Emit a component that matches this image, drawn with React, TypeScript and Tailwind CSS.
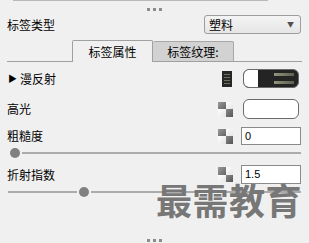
const font = { fontFamily: '"Noto Sans CJK SC", "Noto Sans", sans-serif' };

const Dots = () => (
  <div className="flex justify-center gap-[3px]">
    <span className="h-[3px] w-[3px] bg-[#8c8c8c]" />
    <span className="h-[3px] w-[3px] bg-[#8c8c8c]" />
    <span className="h-[3px] w-[3px] bg-[#8c8c8c]" />
  </div>
);

const Checker = () => (
  <div className="grid h-[15px] w-[15px] grid-cols-2 grid-rows-2">
    <span className="bg-gradient-to-br from-[#9a9a9a] to-[#666666]" />
    <span className="bg-gradient-to-br from-white to-[#e4e4e4]" />
    <span className="bg-gradient-to-br from-white to-[#e4e4e4]" />
    <span className="bg-gradient-to-br from-[#8a8a8a] to-[#555555]" />
  </div>
);

const Slider = ({ pos }: { pos: number }) => (
  <div className="flex h-[10px] items-center pl-[8px] pr-[8px]">
    <div className="h-[2px] bg-[#ababab]" style={{ width: pos }} />
    <span className="mx-[2px] h-[10px] w-[10px] shrink-0 rounded-full bg-[#808080]" />
    <div className="h-[2px] flex-1 bg-[#ababab]" />
  </div>
);

export default function App() {
  return (
    <div className="relative h-[243px] w-[309px] overflow-hidden bg-[#f0f0f0] text-[12px] leading-none text-black" style={font}>
      <div className="ml-[13px] h-px w-[255px] bg-[#b9b9b9]" />
      <div className="mt-[7px]">
        <Dots />
      </div>

      {/* type row */}
      <div className="mt-[4px] flex h-[19px] items-center pl-[7px] pr-[8px]">
        <span className="flex-1">标签类型</span>
        <div className="flex h-[19px] w-[97px] items-center justify-between rounded-[3px] border border-[#9d9d9d] bg-gradient-to-b from-[#f4f4f4] to-[#e6e6e6] pl-[4px] pr-[6px]">
          <span>塑料</span>
          <span className="text-[7px] text-[#505050]">▼</span>
        </div>
      </div>

      {/* tabs */}
      <div className="mx-[7px] mt-[6px] flex h-[22px] items-end border-b border-[#a0a0a0] pl-[65px]">
        <div className="-mb-px flex h-[22px] w-[81px] items-center justify-center rounded-t-[2px] border border-b-0 border-[#a0a0a0] bg-[#f0f0f0]">
          标签属性
        </div>
        <div className="flex h-[20px] w-[81px] items-center justify-center rounded-t-[2px] border border-b-0 border-l-0 border-[#a8a8a8] bg-[#d2d2d2]">
          标签纹理:
        </div>
      </div>

      {/* diffuse */}
      <div className="mt-[7px] flex h-[19px] items-center pl-[8px] pr-[10px]">
        <span className="mr-[3px] text-[9px]">▶</span>
        <span className="flex-1">漫反射</span>
        <div className="mr-[11px] flex h-[16px] w-[10px] flex-col justify-center gap-[2px] bg-[#262626] px-[2px]">
          <span className="h-px bg-[#6d7260]" />
          <span className="h-px bg-[#6d7260]" />
          <span className="h-px bg-[#6d7260]" />
          <span className="h-px bg-[#6d7260]" />
        </div>
        <div className="flex h-[19px] w-[56px] overflow-hidden rounded-[6px] border border-[#6a6a6a] bg-[#242424]">
          <span className="w-[14px] bg-white" />
          <div className="flex flex-1 flex-col justify-between py-[3px] pr-[4px] pl-[16px]">
            <span className="h-[3px] bg-gradient-to-r from-[#8f957c] to-[#5d614f]" />
            <span className="h-[3px] bg-gradient-to-r from-[#8f957c] to-[#5d614f]" />
          </div>
        </div>
      </div>

      {/* specular */}
      <div className="mt-[11px] flex h-[20px] items-center pl-[7px] pr-[10px]">
        <span className="flex-1">高光</span>
        <div className="mr-[10px]">
          <Checker />
        </div>
        <div className="h-[20px] w-[56px] rounded-[6px] border border-[#6a6a6a] bg-white" />
      </div>

      {/* roughness */}
      <div className="mt-[8px] flex h-[18px] items-center pl-[7px] pr-[8px]">
        <span className="flex-1">粗糙度</span>
        <div className="mr-[8px]">
          <Checker />
        </div>
        <div className="flex h-[18px] w-[60px] items-center border border-[#8a8a8a] bg-white pl-[3px] text-[11px]" style={{ fontFamily: '"Liberation Sans", sans-serif' }}>
          0
        </div>
      </div>

      <div className="mt-[3px]">
        <Slider pos={0} />
      </div>

      {/* refraction */}
      <div className="mt-[7px] flex h-[19px] items-center pl-[7px] pr-[8px]">
        <span className="flex-1">折射指数</span>
        <div className="mr-[8px]">
          <Checker />
        </div>
        <div className="flex h-[19px] w-[60px] items-center border border-[#8a8a8a] bg-white pl-[3px] text-[11px]" style={{ fontFamily: '"Liberation Sans", sans-serif' }}>
          1.5
        </div>
      </div>

      <div className="mt-[3px]">
        <Slider pos={69} />
      </div>

      <div className="absolute bottom-[1px] left-0 right-0">
        <Dots />
      </div>

      <div className="absolute left-[156px] top-[184px] text-[36px] font-bold leading-[30px] tracking-[0.5px] text-[#777777]">
        最需教育
      </div>
    </div>
  );
}
